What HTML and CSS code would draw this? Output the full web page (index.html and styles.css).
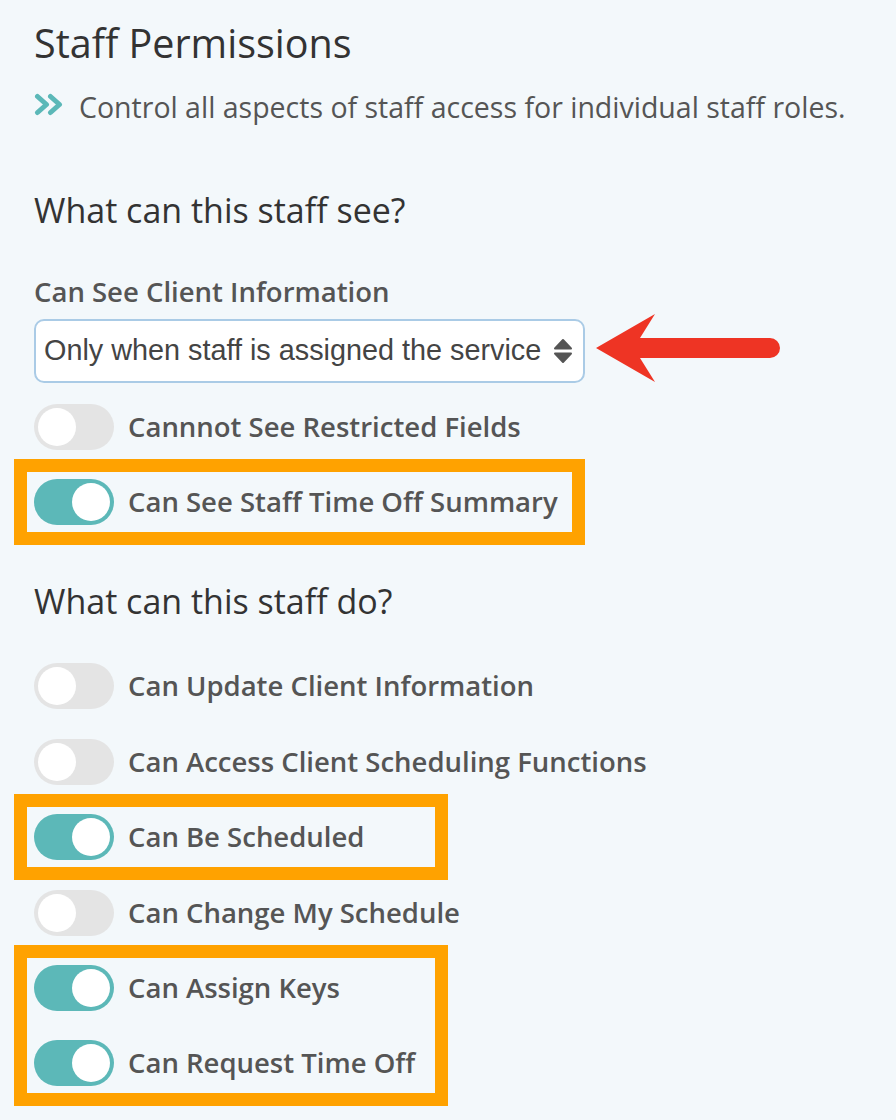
FILE: index.html
```html
<!DOCTYPE html>
<html>
<head>
    <meta charset="UTF-8">
    <title>Staff Permissions</title>
    <link rel="stylesheet" href="styles.css">
</head>
<body>
    <div class="page">
        <h1 class="title">Staff Permissions</h1>
        <p class="lead">
            <svg class="lead-icon" width="30" height="36" viewBox="0 0 30 36">
                <path d="M3.5 7.5 L12.5 15.5 L3.5 23.5 M16.5 7.5 L25.5 15.5 L16.5 23.5" fill="none" stroke="#5bb8b8" stroke-width="5" stroke-linecap="round" stroke-linejoin="round"/>
            </svg>
            Control all aspects of staff access for individual staff roles.
        </p>

        <section class="group">
            <h2 class="group-title">What can this staff see?</h2>
            <label class="field-label">Can See Client Information</label>
            <div class="select-row">
                <div class="select">
                    <span>Only when staff is assigned the service</span>
                    <svg class="select-caret" width="20" height="26" viewBox="0 0 20 26">
                        <path d="M2 10.5 L10 2 L18 10.5 Z M2 15.5 L18 15.5 L10 24 Z" fill="#555" stroke="#555" stroke-width="2" stroke-linejoin="round"/>
                    </svg>
                </div>
                <svg class="pointer" width="186" height="68" viewBox="0 0 186 68">
                    <path d="M0 34 L59 0 L44 24 L174 24 A10 10 0 0 1 174 44 L44 44 L59 68 Z" fill="#ee3424"/>
                </svg>
            </div>

            <div class="toggles">
                <div class="row">
                    <span class="toggle"></span>
                    <span class="row-label">Cannnot See Restricted Fields</span>
                </div>
                <div class="mark mark-wide">
                    <div class="row">
                        <span class="toggle on"></span>
                        <span class="row-label">Can See Staff Time Off Summary</span>
                    </div>
                </div>
            </div>
        </section>

        <section class="group group-do">
            <h2 class="group-title">What can this staff do?</h2>
            <div class="toggles">
                <div class="row">
                    <span class="toggle"></span>
                    <span class="row-label">Can Update Client Information</span>
                </div>
                <div class="row">
                    <span class="toggle"></span>
                    <span class="row-label">Can Access Client Scheduling Functions</span>
                </div>
                <div class="mark mark-narrow">
                    <div class="row">
                        <span class="toggle on"></span>
                        <span class="row-label">Can Be Scheduled</span>
                    </div>
                </div>
                <div class="row">
                    <span class="toggle"></span>
                    <span class="row-label">Can Change My Schedule</span>
                </div>
                <div class="mark mark-narrow toggles">
                    <div class="row">
                        <span class="toggle on"></span>
                        <span class="row-label">Can Assign Keys</span>
                    </div>
                    <div class="row">
                        <span class="toggle on"></span>
                        <span class="row-label">Can Request Time Off</span>
                    </div>
                </div>
            </div>
        </section>
    </div>
</body>
</html>
```

FILE: styles.css
```css
body {
    margin: 0;
    padding: 0;
    background-color: #f3f8fb;
    font-family: 'Open Sans', 'Noto Sans', sans-serif;
    color: #333;
}

.page {
    padding: 19px 0 60px 34px;
}

.title {
    font-size: 39.5px;
    font-weight: 400;
    line-height: 48px;
    margin: 0;
}

.lead {
    display: flex;
    align-items: center;
    gap: 15px;
    margin: 22.3px 0 0;
    font-size: 28.5px;
    line-height: 36px;
    color: #555;
}

.lead-icon {
    flex: none;
}

.group {
    margin-top: 63.5px;
}

.group-do {
    margin-top: 55px;
}

.group-title {
    font-size: 34px;
    font-weight: 400;
    line-height: 42px;
    margin: 0 0 44.5px;
}

.group-do .group-title {
    margin-bottom: 41px;
}

.field-label {
    display: block;
    font-size: 27.5px;
    font-weight: 600;
    line-height: 34px;
    color: #555;
    margin-bottom: 9.7px;
}

.select-row {
    display: flex;
    align-items: flex-start;
    gap: 11px;
}

.select {
    width: 551px;
    height: 64px;
    box-sizing: border-box;
    display: flex;
    align-items: center;
    justify-content: space-between;
    padding: 0 10px 0 8px;
    background-color: #fff;
    border: 2px solid #aacbe6;
    border-radius: 10px;
    font-family: 'Liberation Sans', Arial, sans-serif;
    font-size: 28.8px;
    color: #444;
}

.pointer {
    margin-top: -5px;
}

.toggles {
    display: flex;
    flex-direction: column;
    gap: 29.4px;
}

.group .toggles {
    margin-top: 21px;
}

.group-do .toggles {
    margin-top: 0;
}

.row {
    display: flex;
    align-items: center;
    gap: 14px;
    height: 46px;
}

.row-label {
    font-size: 27.5px;
    font-weight: 600;
    line-height: 34px;
    color: #555;
}

.toggle {
    position: relative;
    flex: none;
    width: 80px;
    height: 46px;
    border-radius: 23px;
    background-color: #e4e4e4;
}

.toggle::after {
    content: "";
    position: absolute;
    top: 4px;
    left: 4px;
    width: 38px;
    height: 38px;
    border-radius: 50%;
    background-color: #fff;
}

.toggle.on {
    background-color: #5cb8b8;
}

.toggle.on::after {
    left: 38px;
}

.mark {
    outline: 13px solid #ffa200;
    outline-offset: 7px;
}

.mark-wide {
    width: 531px;
}

.mark-narrow {
    width: 394px;
}
```
